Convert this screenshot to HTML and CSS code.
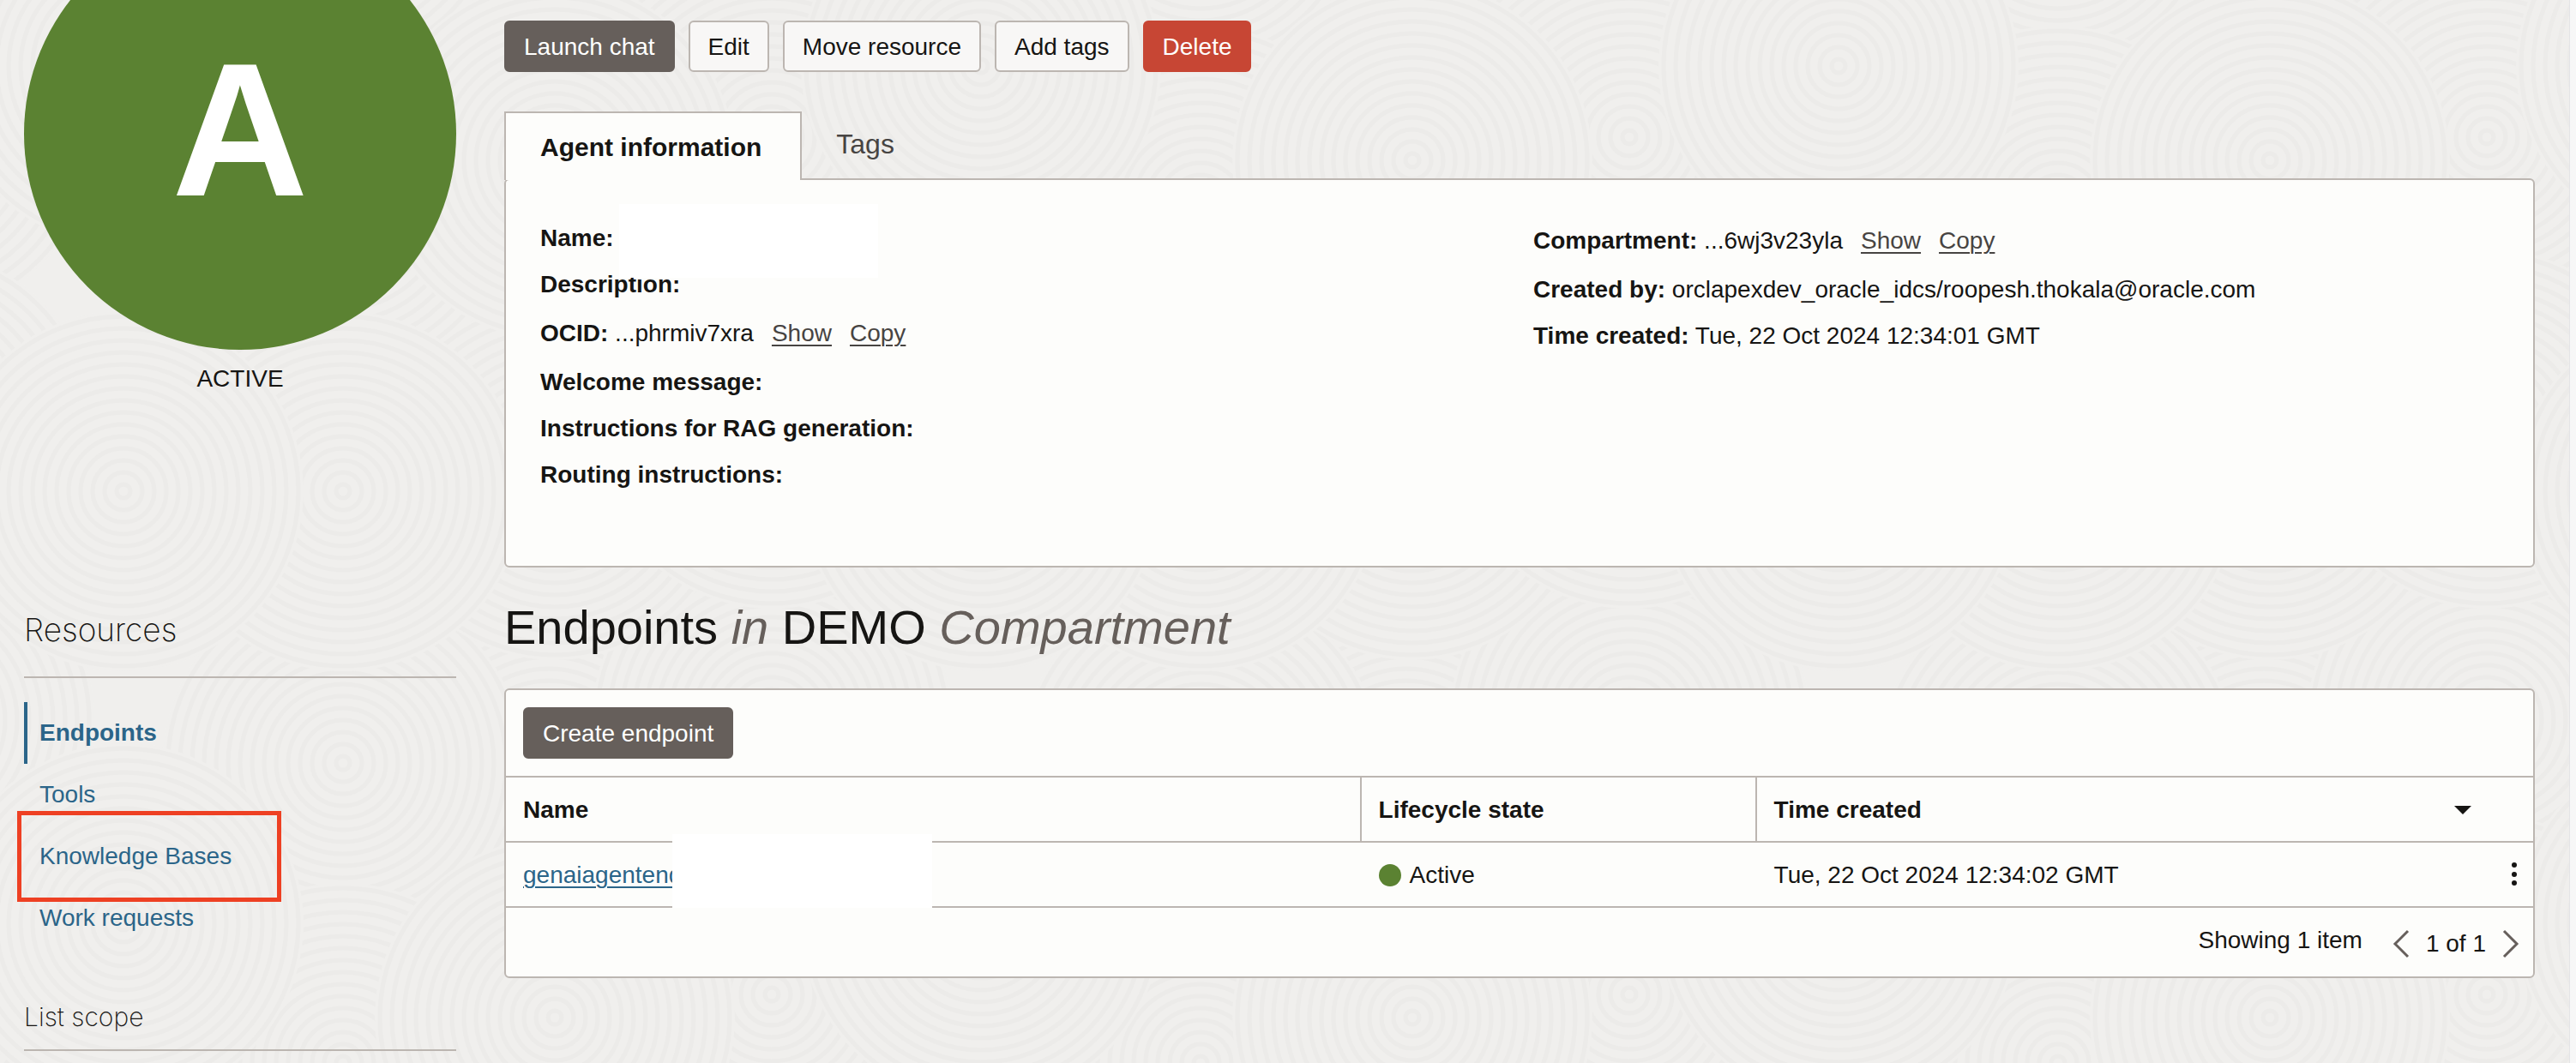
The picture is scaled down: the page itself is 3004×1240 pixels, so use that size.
FILE: index.html
```html
<!DOCTYPE html>
<html lang="en">
<head>
<meta charset="utf-8">
<title>Agent details</title>
<link rel="stylesheet" href="styles.css">
</head>
<body>
<svg class="texture" aria-hidden="true">
  <defs>
    <g id="swirl" fill="none" stroke="#ecebe9" stroke-width="5">
      <circle r="210" fill="#f0efed" stroke="none"/>
      <circle r="8"/><circle r="22"/><circle r="36"/><circle r="50"/><circle r="64"/><circle r="78"/><circle r="92"/><circle r="106"/><circle r="120"/><circle r="134"/><circle r="148"/><circle r="162"/><circle r="176"/><circle r="190"/><circle r="204"/>
    </g>
    <g id="field">
      <use href="#swirl" x="640" y="900"/>
      <use href="#swirl" x="900" y="160"/>
      <use href="#swirl" x="400" y="890"/>
      <use href="#swirl" x="900" y="840"/>
      <use href="#swirl" x="400" y="240"/>
      <use href="#swirl" x="647" y="560"/>
      <use href="#swirl" x="900" y="500"/>
      <use href="#swirl" x="144" y="77"/>
      <use href="#swirl" x="647" y="187"/>
      <use href="#swirl" x="400" y="573"/>
      <use href="#swirl" x="144" y="573"/>
    </g>
    <pattern id="swirls" width="1000" height="1000" patternUnits="userSpaceOnUse">
      <use href="#field" x="-1000" y="-1000"/><use href="#field" y="-1000"/><use href="#field" x="1000" y="-1000"/>
      <use href="#field" x="-1000"/><use href="#field"/><use href="#field" x="1000"/>
      <use href="#field" x="-1000" y="1000"/><use href="#field" y="1000"/><use href="#field" x="1000" y="1000"/>
    </pattern>
  </defs>
  <rect width="100%" height="100%" fill="url(#swirls)"/>
</svg>
<div class="page">
  <aside class="sidebar">
    <div class="status-badge">A</div>
    <p class="status-label">ACTIVE</p>
    <h2 class="side-title">Resources</h2>
    <nav class="side-nav">
      <a class="side-link side-link-current" href="#endpoints">Endpoints</a>
      <a class="side-link" href="#tools">Tools</a>
      <a class="side-link side-link-marked" href="#knowledge-bases">Knowledge Bases</a>
      <a class="side-link" href="#work-requests">Work requests</a>
    </nav>
    <h3 class="side-subtitle">List scope</h3>
  </aside>
  <main class="content">
    <div class="actions">
      <button class="btn btn-primary" type="button">Launch chat</button>
      <button class="btn" type="button">Edit</button>
      <button class="btn" type="button">Move resource</button>
      <button class="btn" type="button">Add tags</button>
      <button class="btn btn-danger" type="button">Delete</button>
    </div>
    <div class="tabs" role="tablist">
      <button class="tab tab-current" type="button" role="tab" aria-selected="true">Agent information</button>
      <button class="tab" type="button" role="tab" aria-selected="false">Tags</button>
    </div>
    <section class="panel info">
      <div class="info-column">
        <p class="info-row info-name"><b>Name:</b></p>
        <p class="info-row"><b>Description:</b></p>
        <p class="info-row info-row-links"><span><b>OCID:</b> ...phrmiv7xra</span><a href="#show-ocid">Show</a><a href="#copy-ocid">Copy</a></p>
        <p class="info-row"><b>Welcome message:</b></p>
        <p class="info-row"><b>Instructions for RAG generation:</b></p>
        <p class="info-row"><b>Routing instructions:</b></p>
      </div>
      <div class="info-column">
        <p class="info-row info-row-links"><span><b>Compartment:</b> ...6wj3v23yla</span><a href="#show-compartment">Show</a><a href="#copy-compartment">Copy</a></p>
        <p class="info-row"><span><b>Created by:</b> orclapexdev_oracle_idcs/roopesh.thokala@oracle.com</span></p>
        <p class="info-row"><span><b>Time created:</b> Tue, 22 Oct 2024 12:34:01 GMT</span></p>
      </div>
    </section>
    <h1 class="heading">Endpoints <em>in</em> DEMO <em>Compartment</em></h1>
    <section class="panel">
      <div class="toolbar">
        <button class="btn btn-primary" type="button">Create endpoint</button>
      </div>
      <table class="endpoints">
        <thead>
          <tr>
            <th class="col-name" scope="col">Name</th>
            <th class="col-state" scope="col">Lifecycle state</th>
            <th scope="col">
              <div class="sortable">Time created
                <svg width="20" height="10" viewBox="0 0 20 10" aria-hidden="true"><path d="M0 0h20L10 10z" fill="#161513"/></svg>
              </div>
            </th>
            <td class="col-menu"></td>
          </tr>
        </thead>
        <tbody>
          <tr>
            <td class="cell-name"><a class="name-link" href="#endpoint">genaiagentend</a></td>
            <td><span class="state"><i class="state-dot"></i>Active</span></td>
            <td>Tue, 22 Oct 2024 12:34:02 GMT</td>
            <td class="col-menu">
              <button class="icon-btn" type="button" aria-label="Row actions">
                <svg width="8" height="28" viewBox="0 0 8 28"><g fill="#161513"><circle cx="4" cy="3" r="3"/><circle cx="4" cy="14" r="3"/><circle cx="4" cy="24" r="3"/></g></svg>
              </button>
            </td>
          </tr>
        </tbody>
      </table>
      <footer class="pager">
        <span class="pager-count">Showing 1 item</span>
        <button class="icon-btn" type="button" aria-label="Previous page">
          <svg width="20" height="34" viewBox="0 0 20 34"><path d="M18 2L3 17l15 15" fill="none" stroke="#665f5b" stroke-width="3"/></svg>
        </button>
        <span>1 of 1</span>
        <button class="icon-btn" type="button" aria-label="Next page">
          <svg width="20" height="34" viewBox="0 0 20 34"><path d="M2 2l15 15L2 32" fill="none" stroke="#665f5b" stroke-width="3"/></svg>
        </button>
      </footer>
    </section>
  </main>
  <div class="scroll-gutter"></div>
</div>
</body>
</html>
```
FILE: styles.css
```css
*,
*::after {
  box-sizing: border-box;
}

body {
  margin: 0;
  overflow: hidden;
  background: #f0efed;
  color: #161513;
  font: 28px/36px "Liberation Sans", Arial, sans-serif;
}

h1, h2, h3, p {
  margin: 0;
  font-weight: 400;
}

button {
  font: inherit;
  color: inherit;
}

.texture {
  position: absolute;
  inset: 0;
  z-index: -1;
  width: 100%;
  height: 100%;
}

.page {
  display: flex;
  gap: 56px;
  min-height: 100vh;
  padding-left: 28px;
}

.sidebar {
  flex: 0 0 504px;
}

.status-badge {
  display: flex;
  align-items: center;
  justify-content: center;
  height: 504px;
  margin-top: -96px;
  padding-bottom: 8px;
  border-radius: 50%;
  background: #5b8232;
  color: #fff;
  font-size: 220px;
  font-weight: 700;
}

.status-label {
  margin-top: 16px;
  text-align: center;
}

.side-title,
.side-subtitle {
  border-bottom: 2px solid #bcb6b1;
  font-family: Inter, "Liberation Sans", sans-serif;
  font-weight: 200;
}

.side-title {
  margin-top: 251px;
  padding-bottom: 30px;
  font-size: 37px;
  line-height: 48px;
}

.side-subtitle {
  margin-top: 61px;
  padding-bottom: 20px;
  font-size: 30px;
  line-height: 36px;
}

.side-nav {
  display: flex;
  flex-direction: column;
  margin-top: 28px;
}

.side-link {
  position: relative;
  padding: 18px 14px;
  border-left: 4px solid transparent;
  color: #2b6589;
  text-decoration: none;
}

.side-link-current {
  border-color: #2b6589;
  font-weight: 700;
}

.side-link-marked::after {
  content: "";
  position: absolute;
  top: -17px;
  left: -12px;
  width: 308px;
  height: 106px;
  border: 5px solid #ee4023;
}

.content {
  flex: 1;
  min-width: 0;
  padding-top: 24px;
}

.actions {
  display: flex;
  gap: 16px;
}

.btn {
  height: 60px;
  padding: 2px 21px 0;
  border: 2px solid #bcb6b1;
  border-radius: 6px;
  background: #f8f7f6;
}

.btn-primary {
  border-color: #665f5b;
  background: #665f5b;
  color: #fff;
}

.btn-danger {
  border-color: #c74634;
  background: #c74634;
  color: #fff;
}

.tabs {
  position: relative;
  display: flex;
  margin: 46px 0 -2px;
}

.tab {
  height: 80px;
  padding: 0 40px 4px;
  border: 0;
  background: none;
  color: #474442;
  font-size: 32px;
}

.tab-current {
  padding: 2px 45px 0 40px;
  border: 2px solid #bcb6b1;
  border-bottom: 0;
  background: #fdfdfb;
  color: #161513;
  font-size: 30px;
  font-weight: 700;
}

.panel {
  border: 2px solid #bcb6b1;
  border-radius: 6px;
  background: #fdfdfb;
}

.info {
  display: grid;
  grid-template-columns: 1fr 1fr;
  gap: 32px;
  padding: 40px 40px 80px;
}

.info-row {
  position: relative;
  display: flex;
  align-items: center;
  gap: 21px;
  height: 54px;
  padding-top: 2px;
}

.info-row-links {
  height: 60px;
}

.info-row a {
  color: #474442;
  text-underline-offset: 4px;
  text-decoration-thickness: 2px;
}

.info-name::after,
.cell-name::after {
  content: "";
  position: absolute;
  z-index: 1;
  height: 86px;
  background: #fff;
}

.info-name::after {
  top: -12px;
  left: 92px;
  width: 302px;
}

.cell-name::after {
  top: -10px;
  left: 194px;
  width: 303px;
}

.heading {
  margin: 34px 0 35px;
  font-size: 56px;
  line-height: 72px;
}

.heading em {
  color: #665f5b;
}

.toolbar {
  padding: 20px;
}

.endpoints {
  width: 100%;
  border-collapse: separate;
  border-spacing: 0;
  table-layout: fixed;
  text-align: left;
}

.endpoints th,
.endpoints td {
  position: relative;
  height: 76px;
  padding: 2px 20px 0;
  border-top: 2px solid #bcb6b1;
}

.endpoints tbody td {
  border-bottom: 2px solid #bcb6b1;
  height: 78px;
}

.endpoints .col-name {
  width: 42.2%;
}

.endpoints .col-state {
  width: 19.5%;
}

.endpoints .col-name,
.endpoints .col-state {
  border-right: 2px solid #bcb6b1;
}

.endpoints .col-menu {
  width: 52px;
  padding: 0 18px 0 26px;
}

.sortable {
  display: flex;
  align-items: center;
  justify-content: space-between;
}

.name-link {
  color: #2b6589;
  text-underline-offset: 4px;
  text-decoration-thickness: 2px;
}

.state {
  display: flex;
  align-items: center;
  gap: 10px;
}

.state-dot {
  width: 26px;
  height: 26px;
  border-radius: 50%;
  background: #5b8232;
}

.icon-btn {
  display: flex;
  padding: 0;
  border: 0;
  background: none;
}

.pager {
  display: flex;
  align-items: center;
  justify-content: flex-end;
  gap: 19px;
  height: 80px;
  padding: 4px 16px 0 0;
}

.pager-count {
  margin-right: 16px;
  padding-bottom: 8px;
}

.scroll-gutter {
  flex: 0 0 8px;
  margin-left: -16px;
  border-left: 1px solid #e4e4e6;
  background: #f7f7f7;
}
```
